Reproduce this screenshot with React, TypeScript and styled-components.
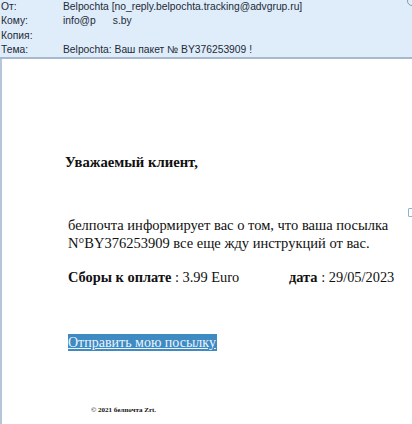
import React from 'react';
import styled, { createGlobalStyle } from 'styled-components';

const GlobalStyle = createGlobalStyle`
  html, body {
    margin: 0;
    padding: 0;
    background: #fff;
    width: 412px;
    height: 424px;
    overflow: hidden;
  }
`;

const Window = styled.div`
  width: 412px;
  height: 424px;
  display: flex;
  flex-direction: column;
  position: relative;
`;

const Header = styled.div`
  height: 59px;
  background: #dfedfb;
  border-bottom: 2px solid #a7b9cc;
  box-sizing: border-box;
  font-family: 'Liberation Sans', Arial, sans-serif;
  font-size: 10.3px;
  color: #1e2a36;
`;

const HeaderRow = styled.div`
  display: flex;
  height: 14.4px;
  line-height: 14.4px;
`;

const Label = styled.div`
  width: 62px;
  padding-left: 1px;
`;

const Value = styled.div`
  flex: 1;
  white-space: nowrap;
`;

const Hidden = styled.span`
  display: inline-block;
  width: 17px;
`;

const Body = styled.div`
  flex: 1;
  border-left: 2px solid #b5c6d8;
  padding-left: 66px;
  font-family: 'Liberation Serif', 'Times New Roman', serif;
  color: #111;
`;

const Greeting = styled.div`
  margin-top: 94px;
  margin-left: -3px;
  font-weight: bold;
  font-size: 14.7px;
  line-height: 18px;
`;

const Paragraph = styled.div`
  margin-top: 45px;
  font-size: 14.5px;
  line-height: 18px;
  white-space: nowrap;
`;

const ChargeRow = styled.div`
  display: flex;
  margin-top: 16px;
  font-size: 14.4px;
  line-height: 18px;
  white-space: nowrap;
`;

const Cell = styled.div<{ $width?: number }>`
  width: ${(p) => (p.$width ? `${p.$width}px` : 'auto')};
  b {
    font-weight: bold;
  }
`;

const SendLink = styled.a`
  display: block;
  width: fit-content;
  margin-top: 48px;
  background: #3e8ac2;
  color: #eef4fa;
  font-size: 14px;
  line-height: 17px;
  text-decoration: underline;
  padding-right: 1px;
`;

const Footer = styled.div`
  margin-top: 55px;
  margin-left: 23px;
  font-size: 7px;
  line-height: 8px;
  font-weight: bold;
`;

const SideMark = styled.div`
  position: absolute;
  right: -4px;
  top: 208px;
  width: 6px;
  height: 7px;
  border: 1px solid #8fb3cf;
  border-radius: 1px;
`;

const CornerMark = styled.div`
  position: absolute;
  right: -5px;
  top: -4px;
  width: 8px;
  height: 8px;
  border: 1px solid #8a9aaa;
  border-radius: 50%;
`;

export default function App() {
  return (
    <>
      <GlobalStyle />
      <Window>
        <Header>
          <HeaderRow>
            <Label>От:</Label>
            <Value>Belpochta [no_reply.belpochta.tracking@advgrup.ru]</Value>
          </HeaderRow>
          <HeaderRow>
            <Label>Кому:</Label>
            <Value>
              info@p<Hidden />s.by
            </Value>
          </HeaderRow>
          <HeaderRow>
            <Label>Копия:</Label>
            <Value />
          </HeaderRow>
          <HeaderRow>
            <Label>Тема:</Label>
            <Value>Belpochta: Ваш пакет № BY376253909 !</Value>
          </HeaderRow>
        </Header>
        <Body>
          <Greeting>Уважаемый клиент,</Greeting>
          <Paragraph>
            белпочта информирует вас о том, что ваша посылка
            <br />
            N°BY376253909 все еще жду инструкций от вас.
          </Paragraph>
          <ChargeRow>
            <Cell $width={221}>
              <b>Сборы к оплате</b> : 3.99 Euro
            </Cell>
            <Cell>
              <b>дата</b> : 29/05/2023
            </Cell>
          </ChargeRow>
          <SendLink href="#">Отправить мою посылку</SendLink>
          <Footer>© 2021 белпочта Zrt.</Footer>
        </Body>
        <SideMark />
        <CornerMark />
      </Window>
    </>
  );
}
